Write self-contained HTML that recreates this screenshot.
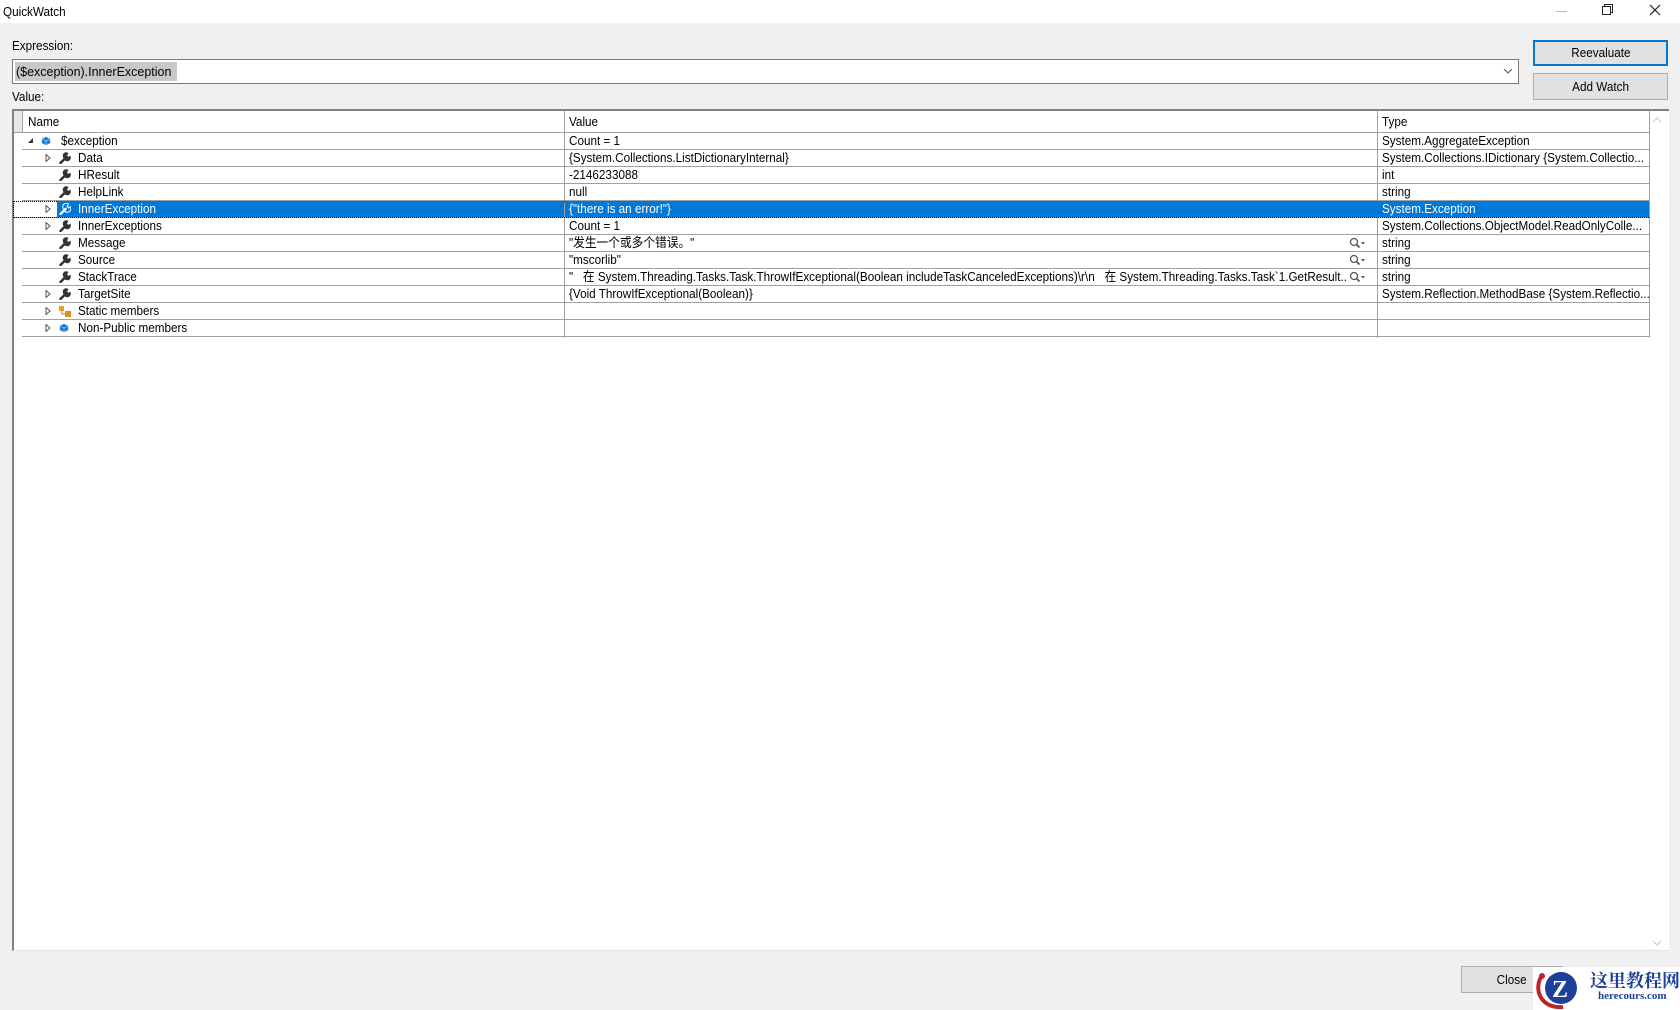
<!DOCTYPE html>
<html><head><meta charset="utf-8"><style>
body{margin:0;width:1680px;height:1010px;background:#f0f0f0;font-family:"Liberation Sans","Noto Sans CJK SC",sans-serif;font-size:13px;color:#000;position:relative;overflow:hidden}
.a{position:absolute}
.t{display:inline-block;transform:scaleX(.9);transform-origin:left center;white-space:nowrap}
.row{position:absolute;left:22px;width:1627px;height:17px;border-bottom:1px solid #a0a0a0;box-sizing:border-box}
.c{position:absolute;top:0;height:16px;line-height:16px;white-space:nowrap;overflow:hidden;box-sizing:border-box}
.sel .c.bl{background:#0078d7;color:#fff}
</style></head><body>
<div class="a" style="left:0;top:0;width:1680px;height:23px;background:#fff"></div>
<div class="a" style="left:3px;top:3px;line-height:17px"><span class="t">QuickWatch</span></div>
<div class="a" style="left:1556px;top:11px;width:11px;height:1px;background:#bbb"></div>
<svg class="a" style="left:1602px;top:4px" width="12" height="12"><rect x="0.5" y="2.5" width="8" height="8" fill="none" stroke="#222"/><path d="M2.5 2.5V0.5H10.5V8.5H8.5" fill="none" stroke="#222"/></svg>
<svg class="a" style="left:1649px;top:4px" width="12" height="12"><path d="M1 1L11 11M11 1L1 11" stroke="#222" stroke-width="1.2"/></svg>

<div class="a" style="left:12px;top:38px;line-height:16px"><span class="t">Expression:</span></div>
<div class="a" style="left:12px;top:59px;width:1507px;height:25px;background:#fff;border:1px solid #7a7a7a;box-sizing:border-box"></div>
<div class="a" style="left:15px;top:62px;width:162px;height:19px;background:#c8c8c8"></div>
<div class="a" style="left:16px;top:62px;line-height:19px"><span class="t" style="transform:scaleX(.96)">($exception).InnerException</span></div>
<svg class="a" style="left:1503px;top:67px" width="10" height="8"><path d="M1 2L5 6L9 2" fill="none" stroke="#555"/></svg>
<div class="a" style="left:12px;top:89px;line-height:16px"><span class="t">Value:</span></div>

<div class="a" style="left:1533px;top:40px;width:135px;height:26px;background:#e1e1e1;border:2px solid #0078d7;box-sizing:border-box;text-align:center;line-height:22px"><span class="t" style="transform-origin:center">Reevaluate</span></div>
<div class="a" style="left:1533px;top:73px;width:135px;height:27px;background:#e1e1e1;border:1px solid #adadad;box-sizing:border-box;text-align:center;line-height:25px"><span class="t" style="transform-origin:center">Add Watch</span></div>

<div class="a" style="left:12px;top:109px;width:1657px;height:842px;background:#fff;border-top:2px solid #828282;border-left:2px solid #828282;border-bottom:1px solid #e3e3e3;box-sizing:border-box"></div>
<div class="a" style="left:14px;top:111px;width:1635px;height:21px;background:#fff;border-bottom:1px solid #a0a0a0"></div>
<div class="a" style="left:14px;top:111px;width:8px;height:21px;background:#e8e8e8;border-right:1px solid #a0a0a0"></div>
<div class="a" style="left:564px;top:111px;width:1px;height:227px;background:#a0a0a0"></div>
<div class="a" style="left:1377px;top:111px;width:1px;height:227px;background:#a0a0a0"></div>
<div class="a" style="left:1649px;top:111px;width:1px;height:227px;background:#a0a0a0"></div>
<div class="a" style="left:28px;top:113px;line-height:17px"><span class="t">Name</span></div>
<div class="a" style="left:569px;top:113px;line-height:17px"><span class="t">Value</span></div>
<div class="a" style="left:1382px;top:113px;line-height:17px"><span class="t">Type</span></div>
<svg class="a" style="left:1652px;top:116px" width="10" height="8"><path d="M1 6L5 2L9 6" fill="none" stroke="#c8c8c8"/></svg>
<svg class="a" style="left:1652px;top:939px" width="10" height="8"><path d="M1 2L5 6L9 2" fill="none" stroke="#c8c8c8"/></svg>

<svg width="0" height="0" style="position:absolute"><defs>
<symbol id="w" viewBox="0 0 12 12"><path d="M1.5 11L6.5 6" stroke="#333" stroke-width="2.5" stroke-linecap="round"/><path d="M5 6.5a3.2 3.2 0 0 1 4.5-5.5L8 3.5l1.5 1.5L11 3.5a3.2 3.2 0 0 1-5.5 4.5z" fill="#333"/></symbol>
<symbol id="ws" viewBox="0 0 12 12"><path d="M1.5 11L6.5 6" stroke="#fff" stroke-width="2.5" stroke-linecap="round"/><path d="M5 6.5a3.2 3.2 0 0 1 4.5-5.5L8 3.5l1.5 1.5L11 3.5a3.2 3.2 0 0 1-5.5 4.5z" fill="none" stroke="#fff"/></symbol>
<symbol id="cu" viewBox="0 0 12 12"><path d="M6 1L11 3.5V8.5L6 11L1 8.5V3.5Z" fill="#1e7ad0"/><path d="M1 3.5L6 6L11 3.5M6 6V11" stroke="#7fc0ff" fill="none"/></symbol>
<symbol id="tr" viewBox="0 0 6 8"><path d="M1 0.5L5 4L1 7.5Z" fill="#fff" stroke="#555"/></symbol>
<symbol id="mg" viewBox="0 0 16 12"><circle cx="5" cy="5" r="3.5" fill="none" stroke="#555" stroke-width="1.3"/><path d="M7.5 7.5L10.5 10.5" stroke="#555" stroke-width="1.8"/><path d="M12 5L16 5L14 7.5Z" fill="#555"/></symbol>
</defs></svg>

<div class="row" style="top:133px"><div class="c" style="left:0;width:542px"><svg class="a" style="left:6px;top:5px" width="6" height="6"><path d="M5 0V5H0Z" fill="#333"/></svg><svg class="a" style="left:19px;top:3px" width="10" height="10"><use href="#cu"/></svg><span class="a" style="left:39px"><span class="t">$exception</span></span></div><div class="c" style="left:547px"><span class="t">Count = 1</span></div><div class="c" style="left:1360px"><span class="t">System.AggregateException</span></div></div>
<div class="row" style="top:150px"><div class="c" style="left:0;width:542px"><svg class="a" style="left:23px;top:4px" width="6" height="8"><use href="#tr"/></svg><svg class="a" style="left:37px;top:2px" width="12" height="12"><use href="#w"/></svg><span class="a" style="left:56px"><span class="t">Data</span></span></div><div class="c" style="left:547px"><span class="t">{System.Collections.ListDictionaryInternal}</span></div><div class="c" style="left:1360px"><span class="t">System.Collections.IDictionary {System.Collectio...</span></div></div>
<div class="row" style="top:167px"><div class="c" style="left:0;width:542px"><svg class="a" style="left:37px;top:2px" width="12" height="12"><use href="#w"/></svg><span class="a" style="left:56px"><span class="t">HResult</span></span></div><div class="c" style="left:547px"><span class="t">-2146233088</span></div><div class="c" style="left:1360px"><span class="t">int</span></div></div>
<div class="row" style="top:184px"><div class="c" style="left:0;width:542px"><svg class="a" style="left:37px;top:2px" width="12" height="12"><use href="#w"/></svg><span class="a" style="left:56px"><span class="t">HelpLink</span></span></div><div class="c" style="left:547px"><span class="t">null</span></div><div class="c" style="left:1360px"><span class="t">string</span></div></div>
<div class="row sel" style="top:201px;left:13px;width:1636px;outline:1px dotted #000;outline-offset:-1px"><svg class="a" style="left:32px;top:4px" width="6" height="8"><use href="#tr"/></svg><div class="c bl" style="left:44px;width:507px"><svg class="a" style="left:2px;top:2px" width="12" height="12"><use href="#ws"/></svg><span class="a" style="left:21px"><span class="t">InnerException</span></span></div><div class="c bl" style="left:552px;width:813px;padding-left:4px"><span class="t">{"there is an error!"}</span></div><div class="c bl" style="left:1365px;width:271px;padding-left:4px"><span class="t">System.Exception</span></div></div>
<div class="row" style="top:218px"><div class="c" style="left:0;width:542px"><svg class="a" style="left:23px;top:4px" width="6" height="8"><use href="#tr"/></svg><svg class="a" style="left:37px;top:2px" width="12" height="12"><use href="#w"/></svg><span class="a" style="left:56px"><span class="t">InnerExceptions</span></span></div><div class="c" style="left:547px"><span class="t">Count = 1</span></div><div class="c" style="left:1360px"><span class="t">System.Collections.ObjectModel.ReadOnlyColle...</span></div></div>
<div class="row" style="top:235px"><div class="c" style="left:0;width:542px"><svg class="a" style="left:37px;top:2px" width="12" height="12"><use href="#w"/></svg><span class="a" style="left:56px"><span class="t">Message</span></span></div><div class="c" style="left:547px"><span class="t">"发生一个或多个错误。"</span></div><svg class="a" style="left:1327px;top:2px" width="16" height="12"><use href="#mg"/></svg><div class="c" style="left:1360px"><span class="t">string</span></div></div>
<div class="row" style="top:252px"><div class="c" style="left:0;width:542px"><svg class="a" style="left:37px;top:2px" width="12" height="12"><use href="#w"/></svg><span class="a" style="left:56px"><span class="t">Source</span></span></div><div class="c" style="left:547px"><span class="t">"mscorlib"</span></div><svg class="a" style="left:1327px;top:2px" width="16" height="12"><use href="#mg"/></svg><div class="c" style="left:1360px"><span class="t">string</span></div></div>
<div class="row" style="top:269px"><div class="c" style="left:0;width:542px"><svg class="a" style="left:37px;top:2px" width="12" height="12"><use href="#w"/></svg><span class="a" style="left:56px"><span class="t">StackTrace</span></span></div><div class="c" style="left:547px;width:778px"><span class="t">"&nbsp;&nbsp; 在 System.Threading.Tasks.Task.ThrowIfExceptional(Boolean includeTaskCanceledExceptions)\r\n&nbsp;&nbsp; 在 System.Threading.Tasks.Task`1.GetResult...</span></div><svg class="a" style="left:1327px;top:2px" width="16" height="12"><use href="#mg"/></svg><div class="c" style="left:1360px"><span class="t">string</span></div></div>
<div class="row" style="top:286px"><div class="c" style="left:0;width:542px"><svg class="a" style="left:23px;top:4px" width="6" height="8"><use href="#tr"/></svg><svg class="a" style="left:37px;top:2px" width="12" height="12"><use href="#w"/></svg><span class="a" style="left:56px"><span class="t">TargetSite</span></span></div><div class="c" style="left:547px"><span class="t">{Void ThrowIfExceptional(Boolean)}</span></div><div class="c" style="left:1360px"><span class="t">System.Reflection.MethodBase {System.Reflectio...</span></div></div>
<div class="row" style="top:303px"><div class="c" style="left:0;width:542px"><svg class="a" style="left:23px;top:4px" width="6" height="8"><use href="#tr"/></svg><svg class="a" style="left:37px;top:2px" width="13" height="13"><rect x="0" y="1" width="5" height="5" fill="#e8a020"/><rect x="6" y="6" width="6" height="6" fill="#d89020"/><path d="M3 6V9H6" stroke="#888" fill="none"/></svg><span class="a" style="left:56px"><span class="t">Static members</span></span></div></div>
<div class="row" style="top:320px"><div class="c" style="left:0;width:542px"><svg class="a" style="left:23px;top:4px" width="6" height="8"><use href="#tr"/></svg><svg class="a" style="left:37px;top:3px" width="10" height="10"><use href="#cu"/></svg><span class="a" style="left:56px"><span class="t">Non-Public members</span></span></div></div>

<div class="a" style="left:1461px;top:966px;width:102px;height:27px;background:#e1e1e1;border:1px solid #adadad;box-sizing:border-box;text-align:center;line-height:25px"><span class="t" style="transform-origin:center">Close</span></div>
<div class="a" style="left:1533px;top:967px;width:147px;height:43px;background:#fff"></div>
<svg class="a" style="left:1533px;top:967px" width="50" height="43"><path d="M8 10C0 25 10 42 30 40" stroke="#c0242a" stroke-width="4" fill="none"/><circle cx="9" cy="9" r="3" fill="#c0242a"/><circle cx="28" cy="21" r="16" fill="#1e3f9a"/><text x="19" y="30" font-family="Liberation Serif" font-weight="bold" font-size="24" fill="#fff">Z</text></svg>
<div class="a" style="left:1590px;top:969px;font-family:'Noto Serif CJK SC',serif;font-weight:bold;font-size:18px;color:#1e3f9a;line-height:22px">这里教程网</div>
<div class="a" style="left:1598px;top:990px;font-family:'Liberation Serif',serif;font-weight:bold;font-size:11px;color:#1e3f9a">herecours.com</div>
</body></html>
